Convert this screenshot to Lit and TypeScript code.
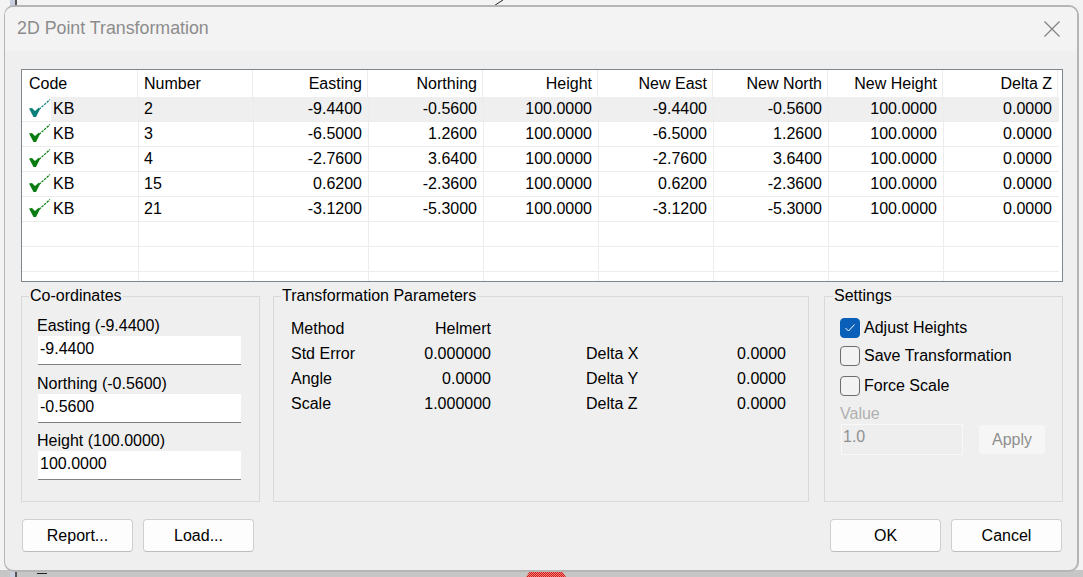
import { LitElement, html, css, svg } from "lit";
import { customElement } from "lit/decorators.js";

const COLS = ["Code", "Number", "Easting", "Northing", "Height", "New East", "New North", "New Height", "Delta Z"];
const ROWS = [
  ["KB", "2", "-9.4400", "-0.5600", "100.0000", "-9.4400", "-0.5600", "100.0000", "0.0000"],
  ["KB", "3", "-6.5000", "1.2600", "100.0000", "-6.5000", "1.2600", "100.0000", "0.0000"],
  ["KB", "4", "-2.7600", "3.6400", "100.0000", "-2.7600", "3.6400", "100.0000", "0.0000"],
  ["KB", "15", "0.6200", "-2.3600", "100.0000", "0.6200", "-2.3600", "100.0000", "0.0000"],
  ["KB", "21", "-3.1200", "-5.3000", "100.0000", "-3.1200", "-5.3000", "100.0000", "0.0000"],
];
const EMPTY = [0, 1, 2];

const tick = (color: string) => svg`<svg class="tick" width="22" height="20" viewBox="0 0 22 20">
  <path d="M0 9.5 L3 9 L6 12 L10 8.5 L10.5 11 L7 18 L4.5 18 Z" fill="${color}"/>
  <path d="M10 10.5 L21 0.5" stroke="${color}" stroke-width="1.2" stroke-dasharray="2.5 1" fill="none"/>
</svg>`;

@customElement("app-root")
export class AppRoot extends LitElement {
  static styles = css`
    :host { display: block; width: 1083px; height: 577px; overflow: hidden; position: relative;
      font-family: "Liberation Sans", Arial, sans-serif; font-size: 16px; color: #000; background: #f3f3f3; }
    .backdrop-bottom { position: absolute; left: 0; right: 0; bottom: 0; height: 7px; background: #c6c6c6; }
    .scribble { position: absolute; left: 493px; top: 0; }
    .red { position: absolute; left: 526px; top: 570px; width: 40px; height: 7px;
      background: repeating-conic-gradient(#d4141c 0 25%, #f08878 0 50%) 0 0 / 2px 2px;
      clip-path: polygon(12% 0, 88% 0, 100% 100%, 0 100%); }
    .dash { position: absolute; left: 37px; top: 573px; width: 10px; height: 1px; background: #222; }
    .strip { position: absolute; left: 10px; width: 5px; background: #c9cfdf; }
    .bar { position: absolute; left: 15px; width: 2px; background: #555; }
    .top { top: 0; height: 6px; }
    .bottom { top: 571px; height: 6px; }
    .dialog { position: absolute; left: 4px; top: 5px; width: 1075px; height: 567px; box-sizing: border-box;
      border: 1px solid #b5b5b5; border-width: 2px 2px 2px 1px; border-radius: 10px; background: #efefef;
      display: flex; flex-direction: column; overflow: hidden; }
    .title { height: 43px; flex: none; background: #f3f3f3; display: flex; align-items: center;
      justify-content: space-between; padding: 0 17px 1px 12px; font-size: 17.8px; color: #8c8c8c; }
    .body { flex: 1; display: flex; flex-direction: column; padding: 18px 14px 18px 16px; }
    .table { height: 213px; box-sizing: border-box; border: 1px solid #7f868c; background: #fff; overflow: hidden; flex: none; }
    .row { display: grid; grid-template-columns: 117px repeat(8, 115px); height: 25px; box-sizing: border-box;
      border-bottom: 1px solid #ececec; width: 1037px; }
    .row.head { height: 27px; border-bottom: 0; grid-template-columns: 116px repeat(8, 115px); width: 1036px; }
    .row.sel { background: #efefef; }
    .cell { border-right: 1px solid #ececec; padding: 0 6px 0 5px; display: flex; align-items: center;
      justify-content: flex-end; white-space: nowrap; box-sizing: border-box; }
    .row.head .cell { padding-right: 5px; }
    .row .cell:last-child { border-right: 0; padding-right: 7px; }
    .row.head .cell:last-child { border-right: 1px solid #ececec; padding-right: 5px; }
    .cell.left { justify-content: flex-start; padding-left: 5px; }
    .row.head .cell.left { padding-left: 6px; }
    .row.head .cell.left:first-child { padding-left: 7px; }
    .cell.code { padding: 0; justify-content: flex-start; }
    .icon { width: 29px; height: 24px; margin-right: 2px; background: #fff; display: flex; align-items: center;
      padding-left: 7px; box-sizing: border-box; flex: none; }
    .row:not(.sel) .icon { background: transparent; }
    .tick { display: block; flex: none; }
    .groups { display: flex; margin-top: 5px; height: 215px; flex: none; }
    fieldset { margin: 0; padding: 0; border: 1px solid #d9d9d9; box-sizing: border-box; min-width: 0; flex: none; }
    legend { padding: 0 1px; line-height: 18px; }
    .g1 { width: 239px; margin-right: 13px; padding: 10px 0 0 15px; }
    .g1 legend { margin-left: -8px; }
    .g2 { width: 536px; margin-right: 15px; padding: 11px 0 0 17px; }
    .g2 legend { margin-left: -10px; }
    .g3 { width: 239px; padding: 13px 0 0 15px; }
    .g3 legend { margin-left: -7px; }
    .lbl { height: 21px; line-height: 21px; }
    .input { width: 203px; height: 29px; box-sizing: border-box; background: #fff; border-bottom: 1px solid #808080;
      margin: 0 0 8px 1px; padding: 0 0 3px 2px; display: flex; align-items: center; }
    .input.tight { margin-bottom: 7px; }
    .params { display: grid; grid-template-columns: 100px 100px 95px 100px 100px; grid-auto-rows: 25px; align-items: center; }
    .r { text-align: right; }
    .chk { display: flex; align-items: center; gap: 4px; height: 20px; margin-bottom: 8px; }
    .chk.second { margin-bottom: 10px; }
    .box { width: 20px; height: 20px; box-sizing: border-box; border: 1px solid #6e6e6e; border-radius: 4px; background: #f2f2f2; flex: none; }
    .box.on { background: #0a5fb8; border-color: #0a5fb8; display: flex; align-items: center; justify-content: center; }
    .val { color: #b0b0b0; height: 18px; line-height: 18px; margin-top: 9px; }
    .valrow { display: flex; align-items: center; gap: 16px; margin: 1px 0 0 1px; }
    .dis { width: 122px; height: 31px; box-sizing: border-box; border: 1px solid #f8f8f8; background: #eeeeee; color: #909090;
      padding: 0 0 5px 1px; display: flex; align-items: center; }
    .apply { width: 66px; height: 29px; background: #f6f6f6; border-radius: 4px; color: #8f8f8f;
      display: flex; align-items: center; justify-content: center; }
    .foot { display: flex; justify-content: space-between; margin-top: 17px; padding: 0 1px; }
    .btns { display: flex; gap: 10px; }
    .btn { width: 111px; height: 33px; box-sizing: border-box; border: 1px solid #cfcfcf; border-bottom-color: #bcbcbc;
      border-radius: 4px; background: #fdfdfd; display: flex; align-items: center; justify-content: center; }
  `;

  render() {
    return html`
      <div class="backdrop-bottom"></div>
      <div class="strip top"></div>
      <div class="strip bottom"></div>
      <div class="bar top"></div>
      <div class="bar bottom"></div>
      <svg class="scribble" width="12" height="7" viewBox="0 0 12 7"><path d="M0 6.5 L10 0" stroke="#222" fill="none"/></svg>
      <div class="red"></div>
      <div class="dash"></div>
      <div class="dialog">
        <div class="title">
          <span>2D Point Transformation</span>
          <svg width="16" height="16" viewBox="0 0 16 16"><path d="M0.5 0.5 L15.5 15.5 M15.5 0.5 L0.5 15.5" stroke="#808080" stroke-width="1.2" fill="none"/></svg>
        </div>
        <div class="body">
          <div class="table">
            <div class="row head">
              ${COLS.map((c, i) => html`<div class="cell ${i < 2 ? "left" : ""}">${c}</div>`)}
            </div>
            ${ROWS.map((r, ri) => html`<div class="row ${ri === 0 ? "sel" : ""}">
              <div class="cell code">
                <span class="icon">${tick(ri === 0 ? "#0b7f7a" : "#0a7d12")}</span><span>${r[0]}</span>
              </div>
              <div class="cell left">${r[1]}</div>
              ${r.slice(2).map((v) => html`<div class="cell">${v}</div>`)}
            </div>`)}
            ${EMPTY.map(() => html`<div class="row">${COLS.map(() => html`<div class="cell"></div>`)}</div>`)}
          </div>
          <div class="groups">
            <fieldset class="g1">
              <legend>Co-ordinates</legend>
              <div class="lbl">Easting (-9.4400)</div>
              <div class="input">-9.4400</div>
              <div class="lbl">Northing (-0.5600)</div>
              <div class="input tight">-0.5600</div>
              <div class="lbl">Height (100.0000)</div>
              <div class="input">100.0000</div>
            </fieldset>
            <fieldset class="g2">
              <legend>Transformation Parameters</legend>
              <div class="params">
                <span>Method</span><span class="r">Helmert</span><span></span><span></span><span></span>
                <span>Std Error</span><span class="r">0.000000</span><span></span><span>Delta X</span><span class="r">0.0000</span>
                <span>Angle</span><span class="r">0.0000</span><span></span><span>Delta Y</span><span class="r">0.0000</span>
                <span>Scale</span><span class="r">1.000000</span><span></span><span>Delta Z</span><span class="r">0.0000</span>
              </div>
            </fieldset>
            <fieldset class="g3">
              <legend>Settings</legend>
              <div class="chk"><span class="box on"><svg width="12" height="10" viewBox="0 0 12 10"><path d="M1.5 5 L4.5 8 L10.5 1.5" stroke="#fff" stroke-width="1" fill="none"/></svg></span>Adjust Heights</div>
              <div class="chk second"><span class="box"></span>Save Transformation</div>
              <div class="chk"><span class="box"></span>Force Scale</div>
              <div class="val">Value</div>
              <div class="valrow"><div class="dis">1.0</div><div class="apply">Apply</div></div>
            </fieldset>
          </div>
          <div class="foot">
            <div class="btns"><div class="btn">Report...</div><div class="btn">Load...</div></div>
            <div class="btns"><div class="btn">OK</div><div class="btn">Cancel</div></div>
          </div>
        </div>
      </div>
    `;
  }
}
